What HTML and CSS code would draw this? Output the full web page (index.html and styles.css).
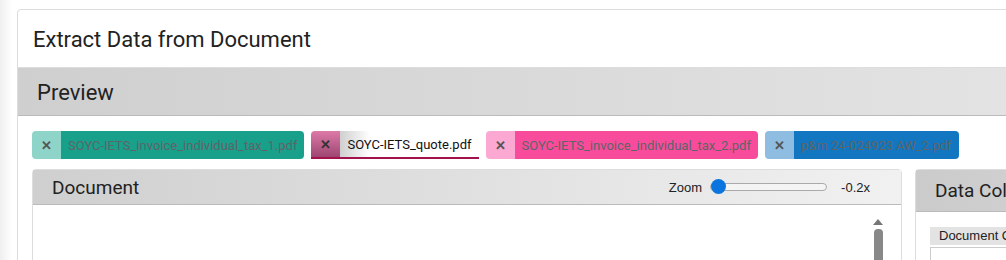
FILE: index.html
```html
<!DOCTYPE html>
<html>
  <head>
    <title>Extract Data from Document</title>
    <link rel="stylesheet" href="styles.css">
  </head>
  <body>

    <div class="card">

      <div class="card-title">Extract Data from Document</div>

      <div class="bar">Preview</div>

      <div class="card-body">

        <div class="tabs">
          <div class="tab teal">
            <span class="tab-close">&#x2715;</span>
            <span class="tab-name">SOYC-IETS_invoice_individual_tax_1.pdf</span>
          </div>
          <div class="tab active">
            <span class="tab-close">&#x2715;</span>
            <span class="tab-name">SOYC-IETS_quote.pdf</span>
          </div>
          <div class="tab pink">
            <span class="tab-close">&#x2715;</span>
            <span class="tab-name">SOYC-IETS_invoice_individual_tax_2.pdf</span>
          </div>
          <div class="tab blue">
            <span class="tab-close">&#x2715;</span>
            <span class="tab-name">p&amp;m 24-024923 AW_2.pdf</span>
          </div>
        </div>

        <div class="panels">

          <div class="panel document">
            <div class="panel-head">
              <span class="panel-title">Document</span>
              <div class="zoom">
                <span>Zoom</span>
                <div class="slider"><span class="thumb"></span></div>
                <span class="zoom-value">-0.2x</span>
              </div>
            </div>
            <div class="panel-body">
              <div class="scrollbar">
                <span class="arrow"></span>
                <span class="scroll-thumb"></span>
              </div>
            </div>
          </div>

          <div class="panel data">
            <div class="panel-head data-head">
              <span class="panel-title">Data Collection</span>
            </div>
            <div class="panel-body data-body">
              <div class="field-label">Document Content</div>
              <div class="field-box"></div>
            </div>
          </div>

        </div>

      </div>

    </div>

  </body>
</html>
```

FILE: styles.css
```css
html, body {
  height: 100%;
}

body {
  margin: 0;
  overflow: hidden;
  font-family: Roboto, "Liberation Sans", sans-serif;
  color: #222;
  background: linear-gradient(to right, #efefef, #fff 12px);
}

.card {
  margin: 9px 0 0 17px;
  width: 1300px;
  border: 1px solid #ddd;
  border-radius: 4px;
  background-color: #fff;
}

.card-title {
  height: 57px;
  line-height: 60px;
  padding-left: 15px;
  font-size: 22px;
}

.bar {
  height: 47px;
  line-height: 49px;
  padding-left: 19px;
  font-size: 22px;
  border-top: 1px solid #ddd;
  border-bottom: 1px solid #bbb;
  background: linear-gradient(to right, #cfcfcf, #e3e3e3 990px);
}

.card-body {
  padding: 15px 0 0 14px;
}

/* Tabs */

.tabs {
  display: flex;
  gap: 7px;
}

.tab {
  display: flex;
  height: 28px;
  border-radius: 4px;
  overflow: hidden;
  font-size: 13px;
  color: #5f6468;
}

.tab-close {
  width: 29px;
  display: flex;
  justify-content: center;
  align-items: center;
  font-size: 13px;
  font-weight: bold;
  color: #555;
}

.tab-name {
  display: flex;
  align-items: center;
  padding: 0 7px;
}

.teal .tab-close { background-color: #8fd4c8; }
.teal .tab-name { background-color: #18a08b; }

.pink .tab-close { background-color: #fba8d2; }
.pink .tab-name { background-color: #f94b9b; }

.blue .tab-close { background-color: #8ebde1; }
.blue .tab-name { background-color: #1276c0; }

.active {
  border-radius: 4px 4px 0 0;
  border-bottom: 2px solid #a3124d;
  height: 26px;
  color: #111;
}

.active .tab-close {
  background: linear-gradient(to bottom, #dd7aa8, #9e4672);
  color: #333;
}

.active .tab-name {
  background: linear-gradient(to right, #cfcfcf, #fff 30px);
}

/* Panels */

.panels {
  display: flex;
  gap: 13px;
  margin-top: 10px;
}

.panel {
  flex-shrink: 0;
  border: 1px solid #ddd;
  border-radius: 4px;
  background-color: #fff;
}

.document {
  width: 868px;
}

.data {
  width: 300px;
}

.panel-head {
  display: flex;
  align-items: center;
  height: 34px;
  padding: 0 31px 0 19px;
  border-bottom: 1px solid #bbb;
  background: linear-gradient(to right, #cfcfcf, #f1f1f1);
}

.panel-title {
  font-size: 19px;
}

.zoom {
  margin-left: auto;
  display: flex;
  align-items: center;
  font-family: "Liberation Sans", Arial, sans-serif;
  font-size: 13px;
  color: #222;
}

.slider {
  position: relative;
  width: 115px;
  height: 6px;
  margin: 0 14px 0 8px;
  border: 1px solid #aaa;
  border-radius: 4px;
  background-color: #f4f4f4;
}

.thumb {
  position: absolute;
  left: 0;
  top: -5px;
  width: 15px;
  height: 15px;
  border-radius: 50%;
  background-color: #0a75de;
}

.panel-body {
  height: 60px;
  display: flex;
  justify-content: flex-end;
}

.scrollbar {
  width: 12px;
  margin-right: 17px;
  padding-top: 14px;
  display: flex;
  flex-direction: column;
  align-items: center;
  gap: 4px;
}

.arrow {
  width: 0;
  height: 0;
  border-left: 5px solid transparent;
  border-right: 5px solid transparent;
  border-bottom: 6px solid #777;
}

.scroll-thumb {
  width: 9px;
  height: 40px;
  border-radius: 4px;
  background-color: #888;
}

.data-head {
  height: 41px;
  background: linear-gradient(to right, #cbcbcb, #d8d8d8);
}

.data-body {
  display: block;
  padding: 15px 0 0 14px;
}

.field-label {
  height: 18px;
  line-height: 18px;
  padding-left: 9px;
  font-family: "Liberation Sans", Arial, sans-serif;
  font-size: 13px;
  background-color: #e3e3e3;
}

.field-box {
  height: 30px;
  margin-top: 2px;
  border: 1px solid #ccc;
}
```
